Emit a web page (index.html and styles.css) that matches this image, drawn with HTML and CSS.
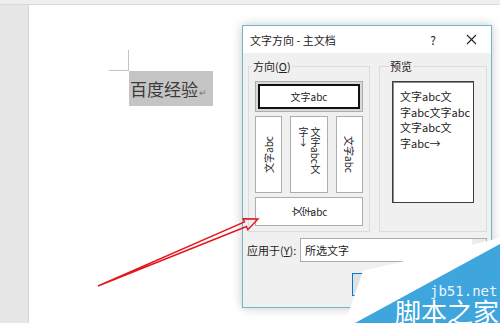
FILE: index.html
```html
<!DOCTYPE html>
<html lang="zh-CN">
<head>
    <meta charset="UTF-8">
    <title>文字方向</title>
    <link rel="stylesheet" href="styles.css">
</head>
<body>
    <div class="screen">
        <div class="ruler"></div>
        <div class="workspace">
            <div class="sidebar"></div>
            <div class="page">
                <div class="corner"></div>
                <p class="line"><span class="sel">百度经验<span class="para">↵</span></span></p>
            </div>
        </div>

        <div class="dialog">
            <div class="titlebar">
                <span class="title">文字方向 - 主文档</span>
                <span class="help">?</span>
                <span class="close">
                    <svg width="11" height="11" viewBox="0 0 11 11"><path d="M1 1L10 10M10 1L1 10" stroke="#222" stroke-width="1.1" fill="none"/></svg>
                </span>
            </div>
            <div class="body">
                <div class="groups">
                    <fieldset class="group group-dir">
                        <legend>方向(<u>O</u>)</legend>
                        <div class="options">
                            <div class="opt opt-wide selected"><span class="inner">文字abc</span></div>
                            <div class="opt"><span class="rot-ccw">文字abc</span></div>
                            <div class="opt"><span class="vert">文字abc文字→</span></div>
                            <div class="opt"><span class="rot-cw">文字abc</span></div>
                            <div class="opt opt-wide"><span class="side"><i>文</i><i>字</i>abc</span></div>
                        </div>
                    </fieldset>
                    <fieldset class="group group-preview">
                        <legend>预览</legend>
                        <div class="preview">
                            文字abc文<br>
                            字abc文字abc<br>
                            文字abc文<br>
                            字abc→
                        </div>
                    </fieldset>
                </div>
                <div class="apply">
                    <label>应用于(<u>Y</u>):</label>
                    <div class="select">
                        <span class="value">所选文字</span>
                        <span class="drop">
                            <svg width="8" height="5" viewBox="0 0 8 5"><path d="M0.5 0.5L4 4L7.5 0.5" stroke="#444" fill="none"/></svg>
                        </span>
                    </div>
                </div>
                <div class="buttons">
                    <button class="btn btn-ok">确定</button>
                    <button class="btn">取消</button>
                </div>
            </div>
        </div>

        <svg class="arrow" width="500" height="323" viewBox="0 0 500 323">
            <polygon points="98,286 246.5,226.5 247.8,229.7 258,219 243.2,218.7 244.5,221.9" fill="none" stroke="#e3161d" stroke-width="1.4" stroke-linejoin="miter"/>
        </svg>

        <svg class="watermark" width="160" height="93" viewBox="0 0 160 93">
            <polygon points="5,93 23,41 160,8 160,93" fill="#ffffff"/>
            <polygon points="160,14 160,93 15,93" fill="#3ea5dd"/>
            <text x="90" y="66" class="wm-url">jb51.net</text>
            <text x="55" y="92" class="wm-name">脚本之家</text>
        </svg>
    </div>
</body>
</html>
```

FILE: styles.css
```css
* {
    margin: 0;
    padding: 0;
    box-sizing: border-box;
}
body {
    font-family: "Noto Sans CJK SC", "Noto Sans", sans-serif;
    background-color: #ffffff;
    color: #1a1a1a;
}
.screen {
    position: relative;
    width: 500px;
    height: 323px;
    overflow: hidden;
    display: flex;
    flex-direction: column;
}
.ruler {
    height: 5px;
    background-color: #efefef;
    border-bottom: 1px solid #dadada;
}
.workspace {
    flex: 1;
    display: flex;
}
.sidebar {
    width: 29px;
    background-color: #e6e6e6;
    border-right: 1px solid #d6d6d6;
}
.page {
    flex: 1;
    background-color: #fff;
    padding: 45px 0 0 80px;
}
.corner {
    width: 20px;
    height: 21px;
    border-right: 1px solid #c4c4c4;
    border-bottom: 1px solid #c4c4c4;
}
.line {
    margin-left: 20px;
}
.sel {
    display: inline-block;
    height: 35px;
    line-height: 35px;
    padding: 0 6px 0 1px;
    background-color: #c5c5c5;
    color: #3a3a3a;
    font-size: 17px;
}
.para {
    font-size: 9px;
    color: #777;
    margin-left: 1px;
}

/* dialog window */
.dialog {
    position: absolute;
    left: 242px;
    top: 25px;
    width: 250px;
    height: 283px;
    border: 1px solid #6cb7c9;
    background-color: #f0f0f0;
    box-shadow: 0 0 10px rgba(0, 0, 0, 0.22);
    display: flex;
    flex-direction: column;
    font-size: 11px;
}
.titlebar {
    height: 27px;
    background-color: #fff;
    display: flex;
    align-items: center;
    padding-left: 7px;
}
.title {
    flex: 1;
    color: #222;
}
.help {
    width: 30px;
    text-align: center;
    font-size: 12px;
    color: #222;
}
.close {
    width: 34px;
    margin: 0 3px 0 6px;
    display: flex;
    justify-content: center;
}
.body {
    flex: 1;
    padding: 6px 4px 0 5px;
}
.groups {
    display: flex;
    gap: 9px;
}
.group {
    border: 1px solid #dcdcdc;
    min-width: 0;
}
.group legend {
    line-height: 14px;
    padding: 0 1px;
    margin-left: -3px;
    color: #222;
}
.group-dir {
    width: 122px;
    padding: 8px 6px 5px 6px;
}
.group-preview {
    flex: 1;
    padding: 8px 12px;
}
.options {
    display: grid;
    grid-template-columns: 27px 38px 27px;
    grid-template-rows: 31px 77px 29px;
    gap: 4px 8px;
}
.opt {
    border: 1px solid #adadad;
    background-color: #fff;
    display: flex;
    align-items: center;
    justify-content: center;
    font-size: 10px;
    color: #222;
    overflow: hidden;
}
.opt-wide {
    grid-column: 1 / 4;
}
.opt.selected {
    background-color: #d9d9d9;
    padding: 2px;
}
.opt .inner {
    width: 100%;
    height: 100%;
    display: flex;
    align-items: center;
    justify-content: center;
    background-color: #fff;
    border: 2px solid #111;
}
.rot-ccw {
    transform: rotate(-90deg);
    white-space: nowrap;
}
.rot-cw {
    transform: rotate(90deg);
    white-space: nowrap;
}
.vert {
    writing-mode: vertical-rl;
    height: 56px;
    line-height: 12px;
}
.side i {
    font-style: normal;
    display: inline-block;
    transform: rotate(-90deg);
}
.preview {
    width: 82px;
    height: 122px;
    background-color: #fff;
    border: 1px solid #3c3c3c;
    box-shadow: inset 1px 1px 0 #8a8a8a;
    padding: 7px 0 0 7px;
    line-height: 15.5px;
    font-size: 11px;
    color: #222;
    white-space: nowrap;
}
.apply {
    margin-top: 6px;
    display: flex;
    align-items: center;
}
.apply label {
    width: 53px;
    color: #222;
    margin-left: -1px;
}
.select {
    flex: 1;
    height: 24px;
    background-color: #fff;
    border: 1px solid #adadad;
    display: flex;
    align-items: center;
}
.select .value {
    flex: 1;
    padding-left: 4px;
    color: #222;
}
.select .drop {
    width: 14px;
    height: 100%;
    background-color: #ececec;
    display: flex;
    align-items: center;
    justify-content: center;
}
.buttons {
    margin-top: 11px;
    display: flex;
    justify-content: flex-end;
    gap: 7px;
}
.btn {
    width: 64px;
    height: 23px;
    border: 1px solid #adadad;
    background-color: #e1e1e1;
    font-family: inherit;
    font-size: 11px;
    color: #222;
}
.btn-ok {
    border-color: #0078d7;
}

/* overlays */
.arrow {
    position: absolute;
    left: 0;
    top: 0;
    pointer-events: none;
}
.watermark {
    position: absolute;
    left: 340px;
    top: 230px;
    pointer-events: none;
}
.wm-url {
    font-family: "DejaVu Sans Mono", monospace;
    font-size: 14px;
    fill: #eaf6fc;
}
.wm-name {
    font-family: "Noto Sans CJK SC", sans-serif;
    font-size: 26px;
    fill: #ffffff;
}
```
